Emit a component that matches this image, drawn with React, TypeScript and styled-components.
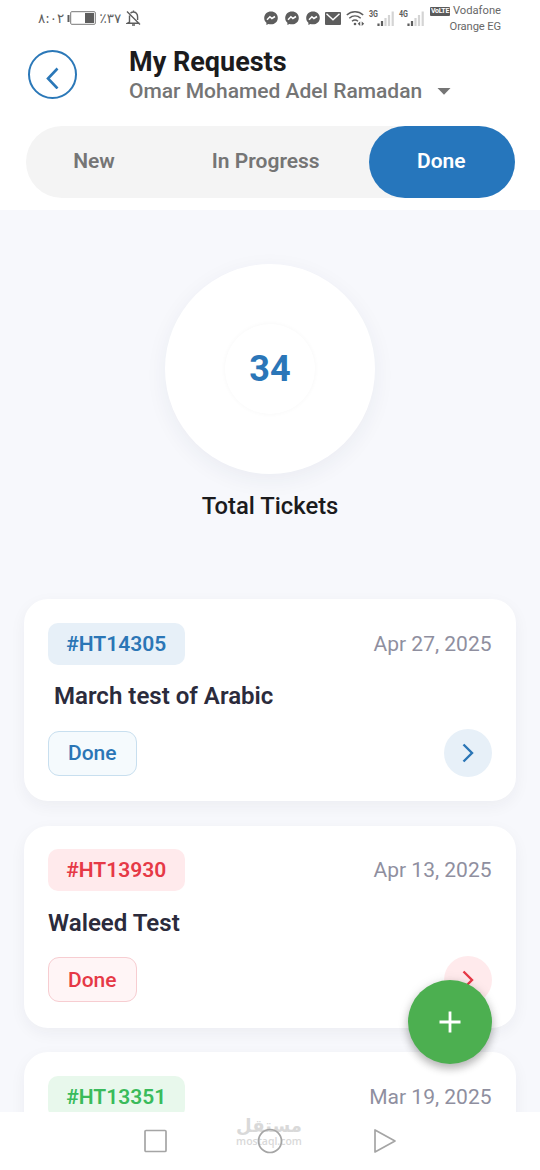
import React from "react";
import styled, { createGlobalStyle } from "styled-components";

const GlobalStyle = createGlobalStyle`
  * { box-sizing: border-box; }
  body { margin: 0; background: #fff; font-family: Roboto, "Liberation Sans", sans-serif; }
  button { font: inherit; border: 0; padding: 0; background: none; }
`;

const Screen = styled.div`
  position: relative;
  width: 540px;
  height: 1170px;
  display: flex;
  flex-direction: column;
  overflow: hidden;
  background: #fff;
`;

const StatusBar = styled.div`
  height: 36px;
  padding: 0 39px 0 38px;
  display: flex;
  justify-content: space-between;
  color: #5f5f5f;
`;

const StatusGroup = styled.div<{ $gap: number }>`
  display: flex;
  align-items: center;
  gap: ${(p) => p.$gap}px;
  height: 36px;
`;

const ArabicText = styled.span<{ $width: number }>`
  width: ${(p) => p.$width}px;
  font: 13.5px/16px "DejaVu Sans", sans-serif;
  letter-spacing: -1.7px;
  white-space: nowrap;
  direction: ltr;
  unicode-bidi: bidi-override;
`;

const Carriers = styled.div`
  width: 76px;
  padding-top: 3px;
  height: 36px;
  display: flex;
  flex-direction: column;
  align-items: flex-end;
  font-size: 11.2px;
  line-height: 16px;
  white-space: nowrap;
  color: #686868;
`;

const Carrier = styled.div<{ $spacing?: number }>`
  display: flex;
  align-items: center;
  gap: 3px;
  letter-spacing: ${(p) => p.$spacing ?? 0}px;
`;

const Volte = styled.span`
  height: 9px;
  width: 20px;
  background: #5a5a5a;
  color: #fff;
  font-size: 7px;
  font-weight: 700;
  line-height: 9px;
  text-align: center;
  letter-spacing: -0.3px;
  border-radius: 1px;
`;

const Header = styled.header`
  height: 90px;
  padding: 9px 28px 0;
  display: flex;
  gap: 52px;
  align-items: flex-start;
`;

const BackButton = styled.button`
  width: 49px;
  height: 49px;
  margin-top: 5px;
  border: 2px solid #2b78b8;
  border-radius: 50%;
  display: grid;
  place-items: center;
`;

const Heading = styled.div`
  display: flex;
  flex-direction: column;
`;

const PageTitle = styled.h1`
  margin: 0;
  font-size: 27px;
  font-weight: 700;
  line-height: 34px;
  color: #1b1b1d;
`;

const UserPicker = styled.div`
  display: flex;
  align-items: center;
  gap: 15px;
  font-size: 21px;
  font-weight: 500;
  line-height: 24px;
  color: #757575;
`;

const Tabs = styled.nav`
  margin: 0 25.5px;
  height: 72px;
  flex: none;
  display: flex;
  border-radius: 36px;
  background: #f4f4f4;
`;

const Tab = styled.button<{ $width: number; $active?: boolean }>`
  width: ${(p) => p.$width}px;
  padding: 0 1px 2px 0;
  border-radius: 36px;
  font-size: 21px;
  font-weight: 600;
  color: ${(p) => (p.$active ? "#fff" : "#757575")};
  background: ${(p) => (p.$active ? "#2676bc" : "transparent")};
`;

const Content = styled.main`
  margin-top: 12px;
  height: 902px;
  flex: none;
  overflow: hidden;
  display: flex;
  flex-direction: column;
  background: #f7f8fc;
`;

const Summary = styled.section`
  height: 389px;
  flex: none;
  padding-top: 54px;
  display: flex;
  flex-direction: column;
  align-items: center;
`;

const Disc = styled.div`
  width: 210px;
  height: 210px;
  border-radius: 50%;
  background: #fff;
  display: grid;
  place-items: center;
  box-shadow: 0 6px 22px rgba(40, 50, 80, 0.06);
`;

const Count = styled.div`
  width: 90px;
  height: 90px;
  border-radius: 50%;
  display: grid;
  place-items: center;
  font-size: 36px;
  font-weight: 700;
  letter-spacing: 0.2px;
  color: #2b76b8;
  background: #fff;
  box-shadow: 0 0 5px rgba(0, 0, 0, 0.035);
`;

const SummaryLabel = styled.div`
  margin-top: 17px;
  font-size: 23.8px;
  font-weight: 500;
  line-height: 30px;
  color: #1b1b1d;
`;

const CardList = styled.section`
  padding: 0 24px;
  display: flex;
  flex-direction: column;
  gap: 24.5px;
`;

type Tone = "blue" | "red" | "green";
const tones: Record<Tone, { text: string; tag: string; fill: string; line: string }> = {
  blue: { text: "#2b76b6", tag: "#e7f0f8", fill: "#f5fafd", line: "#c8dfef" },
  red: { text: "#e63946", tag: "#ffeaec", fill: "#fff5f6", line: "#f7cdd1" },
  green: { text: "#3abb5b", tag: "#e8f8ec", fill: "#f5fcf7", line: "#c8ecd2" },
};

const Card = styled.article`
  height: 202px;
  flex: none;
  padding: 24px;
  border-radius: 24px;
  background: #fff;
  box-shadow: 0 5px 16px rgba(40, 45, 65, 0.05);
`;

const CardRow = styled.div<{ $height: number }>`
  height: ${(p) => p.$height}px;
  display: flex;
  align-items: center;
  justify-content: space-between;
`;

const TicketTag = styled.span<{ $tone: Tone }>`
  width: 136.5px;
  height: 42px;
  border-radius: 10px;
  display: grid;
  place-items: center;
  font-size: 21px;
  font-weight: 600;
  color: ${(p) => tones[p.$tone].text};
  background: ${(p) => tones[p.$tone].tag};
`;

const TicketDate = styled.time`
  padding-right: 0.5px;
  font-size: 21px;
  line-height: 24px;
  color: #8f8f9f;
`;

const TicketTitle = styled.h2`
  margin: 0;
  height: 65px;
  font-size: 24.05px;
  font-weight: 600;
  line-height: 65.5px;
  white-space: pre;
  color: #2b2b3c;
`;

const Status = styled.span<{ $tone: Tone }>`
  width: 88.5px;
  height: 45px;
  border: 1.5px solid ${(p) => tones[p.$tone].line};
  border-radius: 11px;
  display: grid;
  place-items: center;
  font-size: 21px;
  font-weight: 500;
  color: ${(p) => tones[p.$tone].text};
  background: ${(p) => tones[p.$tone].fill};
`;

const OpenButton = styled.button<{ $tone: Tone }>`
  width: 48px;
  height: 48px;
  border-radius: 50%;
  display: grid;
  place-items: center;
  color: ${(p) => tones[p.$tone].text};
  background: ${(p) => tones[p.$tone].tag};
`;

const AddButton = styled.button`
  position: absolute;
  right: 48px;
  bottom: 106px;
  width: 84px;
  height: 84px;
  border-radius: 50%;
  display: grid;
  place-items: center;
  background: #4caf50;
  box-shadow: 0 5px 9px rgba(0, 0, 0, 0.24), 0 1px 12px rgba(0, 0, 0, 0.1);
`;

const NavBar = styled.footer`
  position: relative;
  flex: 1;
  padding: 0 143px;
  display: flex;
  align-items: center;
  justify-content: space-between;
  background: #fff;
`;

const Watermark = styled.div`
  position: absolute;
  left: 229px;
  top: 4px;
  width: 80px;
  display: flex;
  flex-direction: column;
  align-items: center;
  color: #d9d9d9;
`;

const WatermarkName = styled.div`
  font: 700 18px/20px "DejaVu Sans", sans-serif;
`;

const WatermarkSite = styled.div`
  margin-top: -1px;
  font: 600 10.5px/12px "Open Sans", sans-serif;
`;

const NavIcon = styled.svg`
  position: relative;
  fill: none;
  stroke: #a5a5a5;
  stroke-width: 1.7;
  stroke-linejoin: round;
`;

const Messenger = () => (
  <svg width="14" height="15" viewBox="0 0 14 15">
    <path d="M7 .5C3.2.5.2 3.2.2 7c0 2 .8 3.600 2.200 4.800V14l2-1.100c.8.300 1.700.4 2.600.4 3.800 0 6.800-2.700 6.800-6.400S10.800.5 7 .5z" fill="#5d5d5d" />
    <path d="M3 8.700 5.900 5.700 7.900 7.500 11 5.500" fill="none" stroke="#fff" strokeWidth="1.500" />
  </svg>
);

const Signal = ({ label }: { label: string }) => (
  <svg width="27" height="20" viewBox="0 0 27 20">
    <text x="1" y="9" fontSize="9.500" fontWeight="700" fontFamily="Roboto" textLength="9" lengthAdjust="spacingAndGlyphs" fill="#5d5d5d">{label}</text>
    <path d="M10.500 15.500v2.500M14 13v5" stroke="#5d5d5d" strokeWidth="2.200" />
    <path d="M17.500 10v8M21 7v11M24.700 3.500v14.500" stroke="#d4d4d4" strokeWidth="2.200" />
  </svg>
);

const tickets: { id: string; date: string; title: string; tone: Tone }[] = [
  { id: "#HT14305", date: "Apr 27, 2025", title: " March test of Arabic", tone: "blue" },
  { id: "#HT13930", date: "Apr 13, 2025", title: "Waleed Test", tone: "red" },
  { id: "#HT13351", date: "Mar 19, 2025", title: "", tone: "green" },
];

export default function App() {
  return (
    <>
      <GlobalStyle />
      <Screen>
        <StatusBar>
          <StatusGroup $gap={4}>
            <ArabicText $width={24.5}>٨:٠٢</ArabicText>
            <svg width="29" height="14" viewBox="0 0 29 14">
              <path d="M1.500 4v7" stroke="#5d5d5d" strokeWidth="2" />
              <rect x="3.700" y=".7" width="24.600" height="12.600" rx="1" fill="#fff" stroke="#777" />
              <rect x="18" y="2" width="9" height="10" fill="#5d5d5d" />
            </svg>
            <ArabicText $width={22}>٪٣٧</ArabicText>
            <svg width="15" height="16" viewBox="0 0 15 16" fill="none" stroke="#5d5d5d" strokeWidth="1.400">
              <path d="M3.500 5.500V12L1.500 13.200h12M4.500 3.200c1.800-1.800 4.800-1.500 6.200.5.8 1 .9 2 .9 3.200V10M7.500 2V.5M6 15h3M1 1.500l13 13" />
            </svg>
          </StatusGroup>
          <StatusGroup $gap={0}>
            <StatusGroup $gap={5}>
              <StatusGroup $gap={7}>
                <Messenger />
                <Messenger />
                <Messenger />
              </StatusGroup>
              <svg width="16" height="13" viewBox="0 0 16 13">
                <rect width="16" height="13" rx="1" fill="#5d5d5d" />
                <path d="m1.500 1.800 6.500 6 6.500-6" fill="none" stroke="#fff" strokeWidth="1.400" />
              </svg>
              <StatusGroup $gap={3}>
                <svg width="19" height="17" viewBox="0 0 19 17" fill="none" stroke="#5d5d5d" strokeWidth="1.500">
                  <path d="M.8 5c4.800-4.300 11.600-4.300 16.400 0M3.300 8.200c3.400-3 8-3 11.400 0M6 11.200c1.900-1.600 4.100-1.600 6 0" />
                  <circle cx="9" cy="14" r="1.300" fill="#5d5d5d" stroke="none" />
                  <path d="m14.200 11.500-2.500 2.200 2.500 2.200zM15.700 11.500l2.500 2.200-2.500 2.200z" fill="#5d5d5d" stroke="none" />
                </svg>
                <Signal label="3G" />
                <Signal label="4G" />
              </StatusGroup>
            </StatusGroup>
            <Carriers>
              <Carrier><Volte>VoLTE</Volte>Vodafone</Carrier>
              <Carrier $spacing={-0.12}>Orange EG</Carrier>
            </Carriers>
          </StatusGroup>
        </StatusBar>
        <Header>
          <BackButton aria-label="Back">
            <svg width="16" height="28" viewBox="0 0 16 28" fill="none" stroke="#2b78b8" strokeWidth="2.600">
              <path d="M12.500 7.500 3 17.500l9.500 10" />
            </svg>
          </BackButton>
          <Heading>
            <PageTitle>My Requests</PageTitle>
            <UserPicker>
              Omar Mohamed Adel Ramadan
              <svg width="14" height="7" viewBox="0 0 14 7"><path d="M.5 0h13L7 6.700z" fill="#757575" /></svg>
            </UserPicker>
          </Heading>
        </Header>
        <Tabs>
          <Tab $width={138}>New</Tab>
          <Tab $width={205.5}>In Progress</Tab>
          <Tab $width={145.5} $active>Done</Tab>
        </Tabs>
        <Content>
          <Summary>
            <Disc><Count>34</Count></Disc>
            <SummaryLabel>Total Tickets</SummaryLabel>
          </Summary>
          <CardList>
            {tickets.map((t) => (
              <Card key={t.id}>
                <CardRow $height={41}>
                  <TicketTag $tone={t.tone}>{t.id}</TicketTag>
                  <TicketDate>{t.date}</TicketDate>
                </CardRow>
                {t.title && (
                  <>
                    <TicketTitle>{t.title}</TicketTitle>
                    <CardRow $height={48}>
                      <Status $tone={t.tone}>Done</Status>
                      <OpenButton $tone={t.tone} aria-label="Open ticket">
                        <svg width="12" height="20" viewBox="0 0 12 20" fill="none" stroke="currentColor" strokeWidth="2.400">
                          <path d="m1.500 1.500 8.500 8.500-8.500 8.500" />
                        </svg>
                      </OpenButton>
                    </CardRow>
                  </>
                )}
              </Card>
            ))}
          </CardList>
        </Content>
        <NavBar>
          <Watermark>
            <WatermarkName>مستقل</WatermarkName>
            <WatermarkSite>mostaql.com</WatermarkSite>
          </Watermark>
          <NavIcon width="24" height="24" viewBox="0 0 24 24"><rect x="2" y="1.500" width="21" height="21" rx="1" /></NavIcon>
          <NavIcon width="26" height="26" viewBox="0 0 26 26"><circle cx="13" cy="13" r="11.500" /></NavIcon>
          <NavIcon width="24" height="26" viewBox="0 0 24 26"><path d="M2 2v22l20-11z" /></NavIcon>
        </NavBar>
        <AddButton aria-label="New request">
          <svg width="22" height="22" viewBox="0 0 22 22" stroke="#fff" strokeWidth="2.800"><path d="M11 .5v21M.5 11h21" /></svg>
        </AddButton>
      </Screen>
    </>
  );
}
